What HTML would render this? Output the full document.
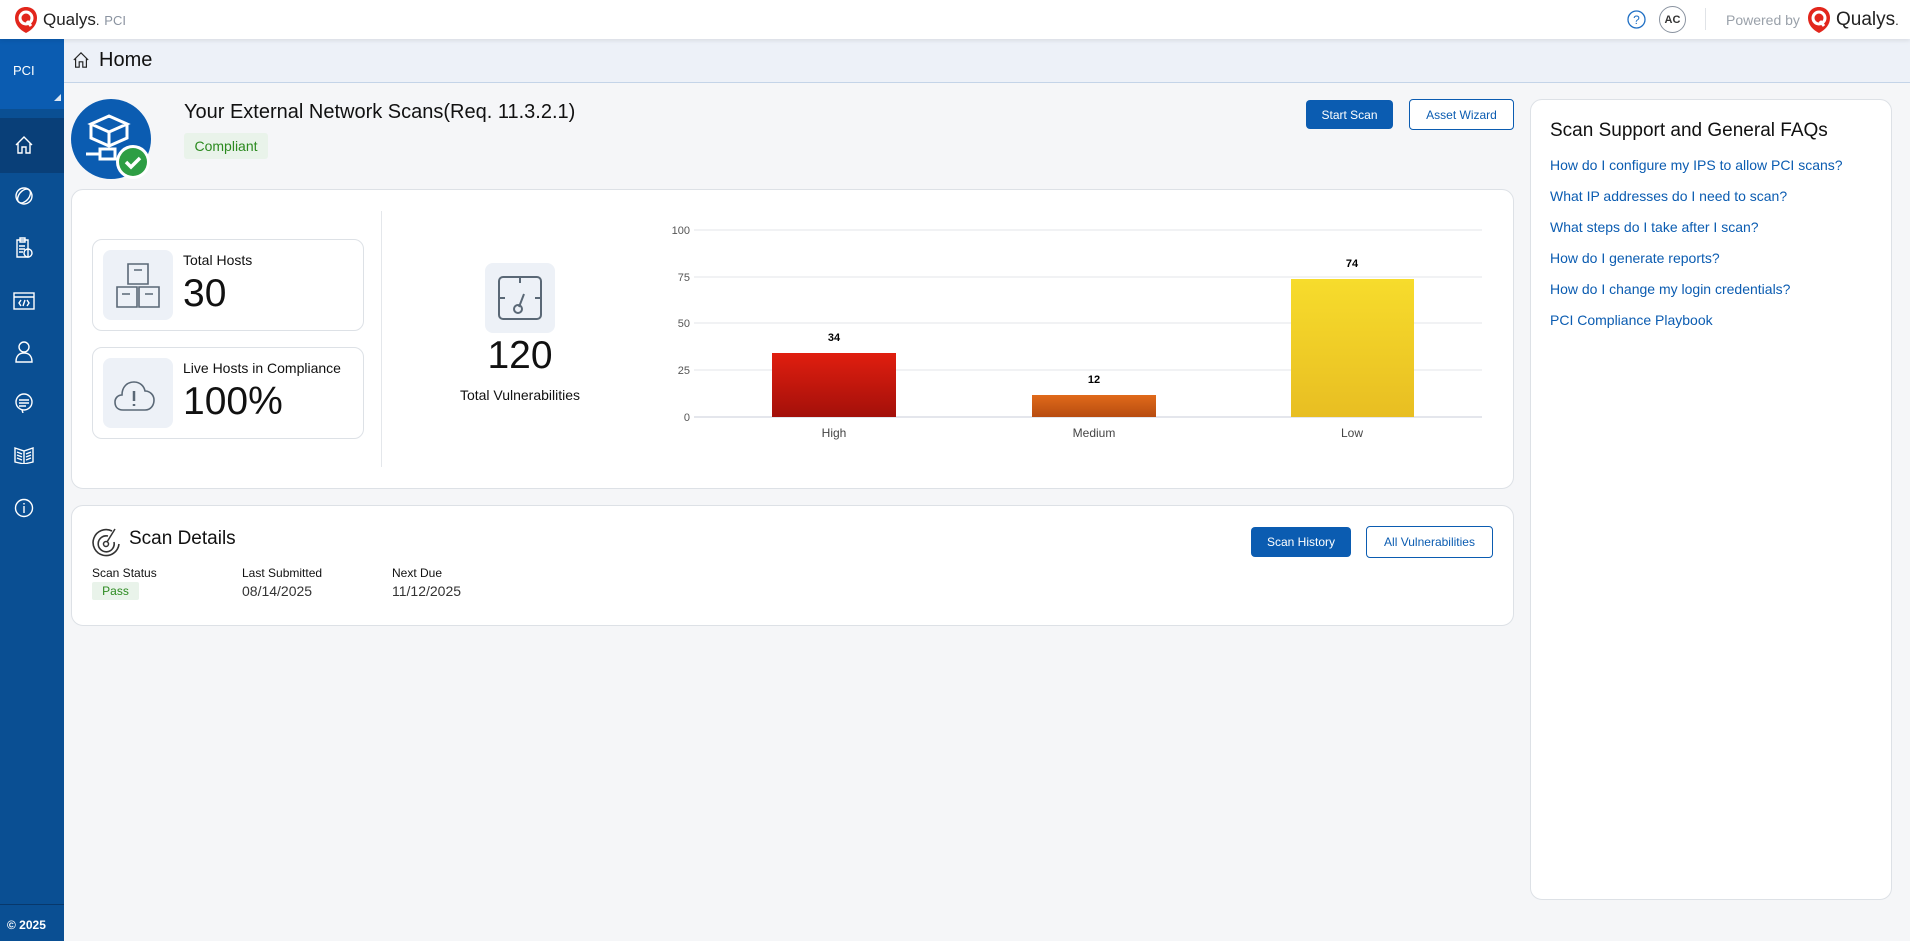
<!DOCTYPE html>
<html><head><meta charset="utf-8"><style>
*{box-sizing:border-box;margin:0;padding:0}
body{width:1910px;height:941px;overflow:hidden;background:#f5f6f8;font-family:"Liberation Sans",sans-serif;color:#111;position:relative}
.abs{position:absolute}
.top{left:0;top:0;width:1910px;height:39px;background:#fff;box-shadow:0 2px 4px rgba(0,0,0,.08);z-index:2}
.side{left:0;top:39px;width:64px;height:902px;background:#0a4f93}
.hdr{left:64px;top:39px;width:1846px;height:44px;background:#edf1f8;border-bottom:1px solid #c4d4e8}
.card{background:#fff;border:1px solid #dde1e6;border-radius:12px}
.btn{border-radius:4px;font-size:12px;display:flex;align-items:center;justify-content:center}
.blue{background:#0b5cb1;color:#fff}
.out{border:1px solid #0b5cb1;color:#0b5cb1;background:#fff}
.faq a{display:block;color:#0b5cb1;font-size:14px;text-decoration:none;margin-bottom:15px}
.ico{stroke:#fff;fill:none;stroke-width:1.4}
</style></head><body>
<div class="abs top">
 <svg class="abs" style="left:14px;top:6px" width="24" height="28" viewBox="0 0 24 28"><path d="M12 1C5 1 1 6 1 12c0 7 5 12 11 15 6-3 11-8 11-15C23 6 19 1 12 1z" fill="#e2261c"/><circle cx="12" cy="12" r="6" fill="none" stroke="#fff" stroke-width="3"/><path d="M13 15l4 5" stroke="#fff" stroke-width="3"/></svg>
 <div class="abs" style="left:43px;top:10px;font-size:17px;color:#222">Qualys<span style="font-size:13px">.</span> <span style="font-size:13px;color:#8a93a0">PCI</span></div>
 <svg class="abs" style="left:1627px;top:10px" width="19" height="19"><circle cx="9.5" cy="9.5" r="8.5" fill="none" stroke="#1f6fc4" stroke-width="1.3"/><text x="9.5" y="14" font-size="12" text-anchor="middle" fill="#1f6fc4" font-family="Liberation Sans">?</text></svg>
 <div class="abs" style="left:1659px;top:6px;width:27px;height:27px;border:1px solid #8a93a0;border-radius:50%;font-size:11px;font-weight:bold;display:flex;align-items:center;justify-content:center;color:#333">AC</div>
 <div class="abs" style="left:1705px;top:8px;width:1px;height:22px;background:#e0e3e7"></div>
 <div class="abs" style="left:1726px;top:12px;font-size:14px;color:#9aa1aa">Powered by</div>
 <svg class="abs" style="left:1807px;top:6px" width="24" height="28" viewBox="0 0 24 28"><path d="M12 1C5 1 1 6 1 12c0 7 5 12 11 15 6-3 11-8 11-15C23 6 19 1 12 1z" fill="#e2261c"/><circle cx="12" cy="12" r="6" fill="none" stroke="#fff" stroke-width="3"/><path d="M13 15l4 5" stroke="#fff" stroke-width="3"/></svg>
 <div class="abs" style="left:1836px;top:9px;font-size:19px;color:#222">Qualys<span style="font-size:13px">.</span></div>
</div>
<div class="abs side">
 <div class="abs" style="left:0;top:0;width:64px;height:70px;background:#0b5cb1"></div>
 <div class="abs" style="left:13px;top:24px;color:#fff;font-size:13px">PCI</div>
 <div class="abs" style="left:54px;top:55px;width:0;height:0;border-left:7px solid transparent;border-bottom:7px solid #dfe8f3"></div>
 <div class="abs" style="left:0;top:79px;width:64px;height:55px;background:#093f78"></div>
 <svg class="abs" style="left:14px;top:96px" width="20" height="20" viewBox="0 0 20 20"><path class="ico" d="M2 10L10 2l8 8M4 8v10h4v-6h4v6h4V8"/></svg>
 <svg class="abs" style="left:14px;top:147px" width="20" height="20"><circle class="ico" cx="10" cy="10" r="8"/><ellipse class="ico" cx="10" cy="10" rx="5" ry="8" transform="rotate(40 10 10)"/></svg>
 <svg class="abs" style="left:15px;top:198px" width="18" height="22"><path class="ico" d="M2 3h11v17H2zM5 1h5v4H5zM4 9h6M4 12h6M4 15h4"/><circle class="ico" cx="13" cy="16" r="4"/></svg>
 <svg class="abs" style="left:13px;top:253px" width="22" height="18"><rect class="ico" x="1" y="1" width="20" height="16"/><path class="ico" d="M1 5h20M8 8l-2 3 2 3M14 8l2 3-2 3M12 8l-2 6"/></svg>
 <svg class="abs" style="left:15px;top:302px" width="18" height="22"><circle class="ico" cx="9" cy="6" r="5"/><path class="ico" d="M1 21c0-6 3-9 8-9s8 3 8 9z"/></svg>
 <svg class="abs" style="left:14px;top:354px" width="20" height="20"><circle class="ico" cx="10" cy="9" r="8"/><path class="ico" d="M5 7h10M5 10h10M5 13h7M8 17l1 3"/></svg>
 <svg class="abs" style="left:14px;top:407px" width="20" height="18"><path class="ico" d="M1 2l9 3 9-3v14l-9 2-9-2zM10 5v13M3 6l5 2M3 9l5 2M3 12l5 2M12 8l5-2M12 11l5-2M12 14l5-2"/></svg>
 <svg class="abs" style="left:14px;top:459px" width="20" height="20"><circle class="ico" cx="10" cy="10" r="8.5"/><path class="ico" d="M10 8v7M10 5v1.5"/></svg>
 <div class="abs" style="left:0;top:865px;width:64px;height:1px;background:#08386b"></div>
 <div class="abs" style="left:7px;top:879px;color:#fff;font-size:12px;font-weight:bold">© 2025</div>
</div>
<div class="abs hdr">
 <svg class="abs" style="left:8px;top:12px" width="18" height="18" viewBox="0 0 20 20"><path d="M2 10L10 2l8 8M4 8v10h4v-6h4v6h4V8" fill="none" stroke="#222" stroke-width="1.3"/></svg>
 <div class="abs" style="left:35px;top:10px;font-size:20px">Home</div>
</div>
<svg class="abs" style="left:71px;top:99px" width="82" height="82" viewBox="0 0 82 82">
 <circle cx="40" cy="40" r="40" fill="#0b5cb1"/>
 <path d="M20 25l18-8 18 8-18 8zM20 25v14l18 8 18-8V25M38 33v14M29 55h-14M29 50h15v10H29z" fill="none" stroke="#fff" stroke-width="3"/>
 <circle cx="62" cy="63" r="17" fill="#fff"/><circle cx="62" cy="63" r="14" fill="#2e9e44"/>
 <path d="M55 63l5 5 9-9" fill="none" stroke="#fff" stroke-width="3.5"/>
</svg>
<div class="abs" style="left:184px;top:101px;font-size:20px">Your External Network Scans(Req. 11.3.2.1)</div>
<div class="abs" style="left:184px;top:133px;width:84px;height:26px;background:#e9f3ea;border-radius:3px;color:#2b8a1f;font-size:14px;display:flex;align-items:center;justify-content:center">Compliant</div>
<div class="abs btn blue" style="left:1306px;top:100px;width:87px;height:29px">Start Scan</div>
<div class="abs btn out" style="left:1409px;top:99px;width:105px;height:31px">Asset Wizard</div>
<div class="abs card" style="left:71px;top:189px;width:1443px;height:300px"></div>
<div class="abs card" style="left:92px;top:239px;width:272px;height:92px;border-radius:10px"></div>
<div class="abs" style="left:103px;top:250px;width:70px;height:70px;background:#edf1f7;border-radius:8px"></div>
<svg class="abs" style="left:113px;top:263px" width="50" height="45"><path d="M12 1h20v20H12zM18 7h8M1 24h20v20H1zM6 31h8M23 24h20v20H23zM29 31h8" fill="none" stroke="#5a6876" stroke-width="1.6" transform="translate(3 0)"/></svg>
<div class="abs" style="left:183px;top:252px;font-size:14px">Total Hosts</div>
<div class="abs" style="left:183px;top:272px;font-size:39px">30</div>
<div class="abs card" style="left:92px;top:347px;width:272px;height:92px;border-radius:10px"></div>
<div class="abs" style="left:103px;top:358px;width:70px;height:70px;background:#edf1f7;border-radius:8px"></div>
<svg class="abs" style="left:113px;top:374px" width="50" height="40"><path d="M10 36C4 36 2 32 2 28s3-7 7-7c0-8 5-13 12-13 6 0 10 4 11 9 5 0 9 4 9 9s-3 10-9 10z" fill="none" stroke="#5a6876" stroke-width="1.6"/><path d="M21 17v10M21 30v2" stroke="#5a6876" stroke-width="2.5"/></svg>
<div class="abs" style="left:183px;top:360px;font-size:14px">Live Hosts in Compliance</div>
<div class="abs" style="left:183px;top:380px;font-size:39px">100%</div>
<div class="abs" style="left:381px;top:211px;width:1px;height:256px;background:#e4e7eb"></div>
<div class="abs" style="left:485px;top:263px;width:70px;height:70px;background:#edf1f7;border-radius:8px"></div>
<svg class="abs" style="left:496px;top:274px" width="48" height="48"><rect x="3" y="3" width="42" height="42" rx="4" fill="none" stroke="#5a6876" stroke-width="2"/><path d="M24 3v6M3 24h6M39 24h6M23 33l5-13" stroke="#5a6876" stroke-width="2" fill="none"/><circle cx="22" cy="35" r="4" fill="none" stroke="#5a6876" stroke-width="2"/></svg>
<div class="abs" style="left:440px;top:334px;width:160px;text-align:center;font-size:39px">120</div>
<div class="abs" style="left:440px;top:387px;width:160px;text-align:center;font-size:14px">Total Vulnerabilities</div>
<svg class="abs" style="left:650px;top:215px" width="850" height="230" font-family="Liberation Sans">
 <g stroke="#e3e6ea" stroke-width="1"><line x1="44" y1="15" x2="832" y2="15"/><line x1="44" y1="62" x2="832" y2="62"/><line x1="44" y1="108" x2="832" y2="108"/><line x1="44" y1="155" x2="832" y2="155"/></g>
 <line x1="44" y1="202" x2="832" y2="202" stroke="#c9cdd8"/>
 <g font-size="11" fill="#555" text-anchor="end"><text x="40" y="19">100</text><text x="40" y="66">75</text><text x="40" y="112">50</text><text x="40" y="159">25</text><text x="40" y="206">0</text></g>
 <defs><linearGradient id="r" x1="0" y1="0" x2="0" y2="1"><stop offset="0" stop-color="#e01e0f"/><stop offset="1" stop-color="#a3100a"/></linearGradient>
 <linearGradient id="o" x1="0" y1="0" x2="0" y2="1"><stop offset="0" stop-color="#e06a1a"/><stop offset="1" stop-color="#b74c10"/></linearGradient>
 <linearGradient id="y" x1="0" y1="0" x2="0" y2="1"><stop offset="0" stop-color="#f7dc2c"/><stop offset="1" stop-color="#e8be22"/></linearGradient></defs>
 <rect x="122" y="138" width="124" height="64" fill="url(#r)"/>
 <rect x="382" y="180" width="124" height="22" fill="url(#o)"/>
 <rect x="641" y="64" width="123" height="138" fill="url(#y)"/>
 <g font-size="11" font-weight="bold" text-anchor="middle"><text x="184" y="126">34</text><text x="444" y="168">12</text><text x="702" y="52">74</text></g>
 <g font-size="12" fill="#444" text-anchor="middle"><text x="184" y="222">High</text><text x="444" y="222">Medium</text><text x="702" y="222">Low</text></g>
</svg>
<div class="abs card" style="left:71px;top:505px;width:1443px;height:121px"></div>
<svg class="abs" style="left:92px;top:527px" width="30" height="30"><path d="M20 4A13 13 0 1 0 27 17" fill="none" stroke="#333" stroke-width="1.6"/><path d="M16 9a8 8 0 1 0 6 6" fill="none" stroke="#333" stroke-width="1.6"/><circle cx="14" cy="17" r="2.5" fill="none" stroke="#333" stroke-width="1.5"/><path d="M15 15l8-13" stroke="#333" stroke-width="1.5"/></svg>
<div class="abs" style="left:129px;top:528px;font-size:19px">Scan Details</div>
<div class="abs btn blue" style="left:1251px;top:527px;width:100px;height:30px">Scan History</div>
<div class="abs btn out" style="left:1366px;top:526px;width:127px;height:32px">All Vulnerabilities</div>
<div class="abs" style="left:92px;top:566px;font-size:12px">Scan Status</div>
<div class="abs" style="left:92px;top:582px;width:47px;height:18px;background:#e9f3ea;border-radius:2px;color:#2b8a1f;font-size:12px;display:flex;align-items:center;justify-content:center">Pass</div>
<div class="abs" style="left:242px;top:566px;font-size:12px">Last Submitted</div>
<div class="abs" style="left:242px;top:583px;font-size:14px;color:#333">08/14/2025</div>
<div class="abs" style="left:392px;top:566px;font-size:12px">Next Due</div>
<div class="abs" style="left:392px;top:583px;font-size:14px;color:#333">11/12/2025</div>
<div class="abs card" style="left:1530px;top:99px;width:362px;height:801px"></div>
<div class="abs faq" style="left:1550px;top:120px">
 <div style="font-size:19px;margin-bottom:15px">Scan Support and General FAQs</div>
 <a>How do I configure my IPS to allow PCI scans?</a>
 <a>What IP addresses do I need to scan?</a>
 <a>What steps do I take after I scan?</a>
 <a>How do I generate reports?</a>
 <a>How do I change my login credentials?</a>
 <a>PCI Compliance Playbook</a>
</div>
</body></html>
